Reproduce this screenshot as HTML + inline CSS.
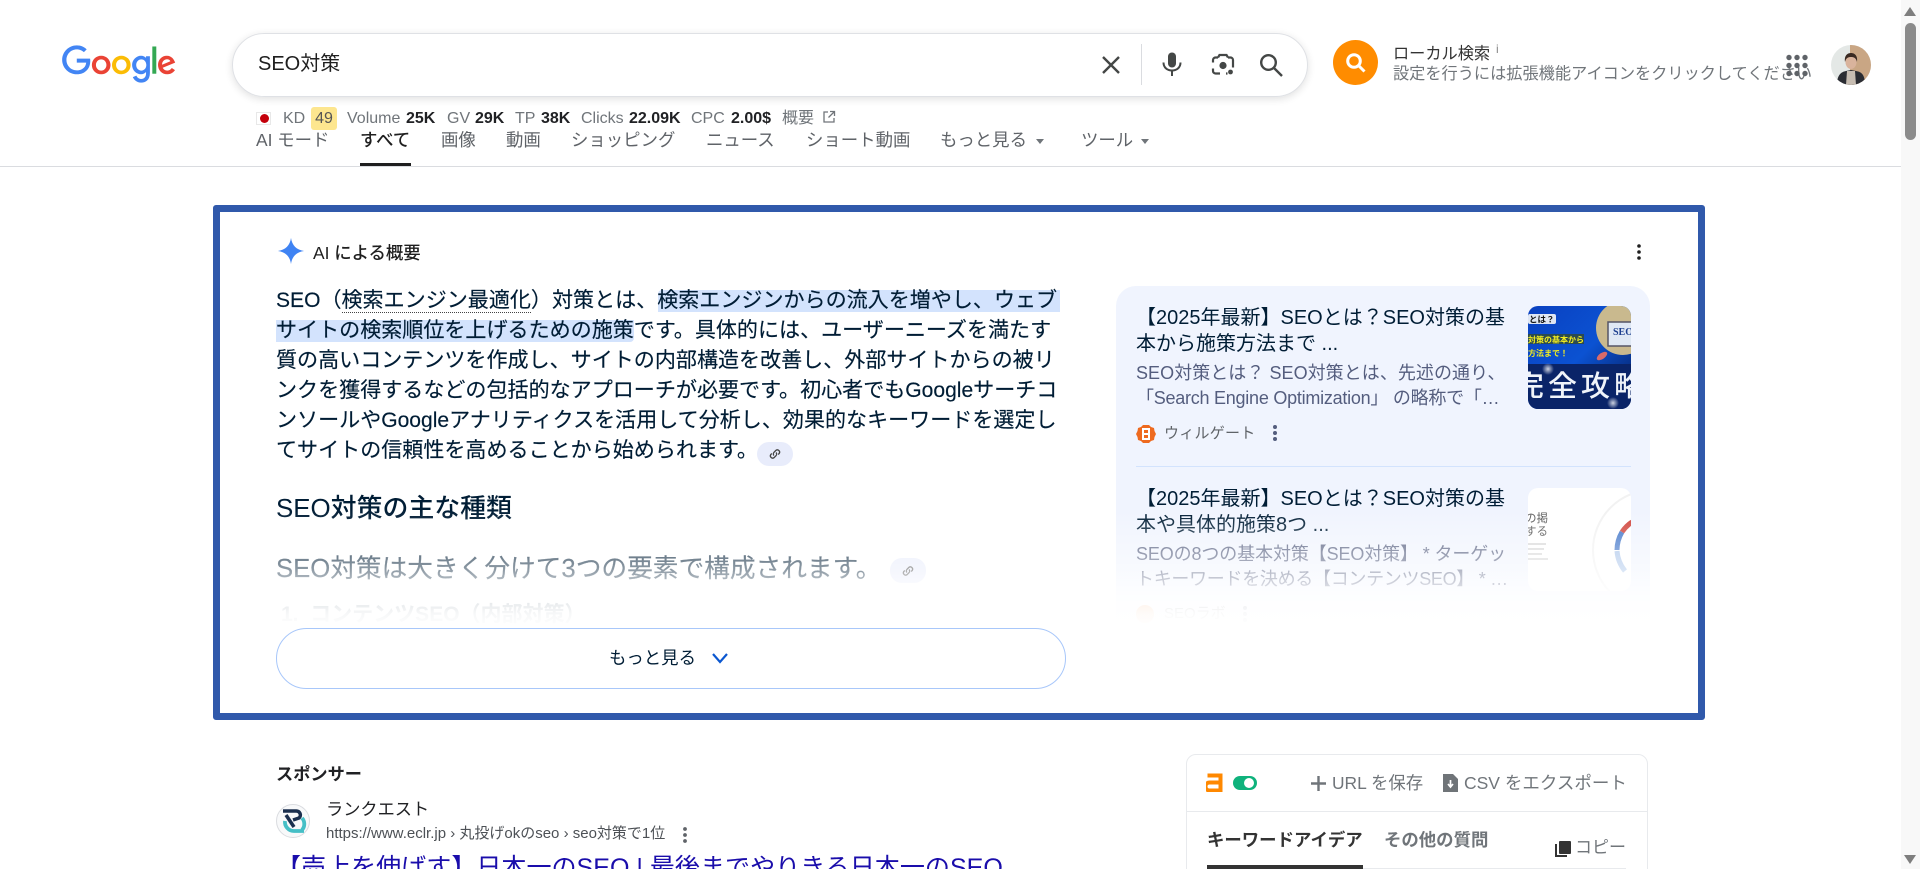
<!DOCTYPE html>
<html lang="ja"><head><meta charset="utf-8"><title>SEO対策 - Google 検索</title>
<style>
html,body{margin:0;padding:0;width:1920px;height:869px;overflow:hidden;background:#fff}
body{position:relative;font-family:"Liberation Sans","Noto Sans CJK JP",sans-serif;color:#1f1f1f}
.a{position:absolute;white-space:nowrap}
.g{color:#70757a}.b{font-weight:700;color:#202124}
.k{font-size:16px;line-height:20px;top:109px}
.t{font-size:17.4px;line-height:24px;top:128px;color:#5f6368}
.l{left:276px;font-size:21.06px;line-height:30px;color:#001d35;-webkit-text-stroke:.15px #001d35}
.h{position:absolute;background:#d3e3fd}
.tt{left:1136px;font-size:20px;line-height:26px;color:#001d35}
.sn{left:1136px;font-size:18px;line-height:25px;color:#545d7e}
svg{position:absolute;display:block}
</style></head><body>

<svg style="left:61.500px;top:44.500px" width="114" height="39" viewBox="0 0 272 92" role="img" aria-label="Google"><title>Google</title>
<path fill="#EA4335" d="M115.75 47.18c0 12.77-9.99 22.18-22.25 22.18s-22.25-9.41-22.25-22.18C71.25 34.32 81.24 25 93.5 25s22.25 9.32 22.25 22.18zm-9.74 0c0-7.98-5.79-13.44-12.51-13.44S80.99 39.2 80.99 47.18c0 7.9 5.79 13.44 12.51 13.44s12.51-5.55 12.51-13.44z"/>
<path fill="#FBBC05" d="M163.75 47.18c0 12.77-9.99 22.18-22.25 22.18s-22.25-9.41-22.25-22.18c0-12.85 9.99-22.18 22.25-22.18s22.25 9.32 22.25 22.18zm-9.74 0c0-7.98-5.79-13.44-12.51-13.44s-12.51 5.46-12.51 13.44c0 7.9 5.79 13.44 12.51 13.44s12.51-5.55 12.51-13.44z"/>
<path fill="#4285F4" d="M209.75 26.34v39.82c0 16.38-9.66 23.07-21.08 23.07-10.75 0-17.22-7.19-19.66-13.07l8.48-3.53c1.51 3.61 5.21 7.87 11.17 7.87 7.31 0 11.84-4.51 11.84-13v-3.19h-.34c-2.18 2.69-6.38 5.04-11.68 5.04-11.09 0-21.25-9.66-21.25-22.09 0-12.52 10.16-22.26 21.25-22.26 5.29 0 9.49 2.35 11.68 4.96h.34v-3.61h9.25zm-8.56 20.92c0-7.81-5.21-13.52-11.84-13.52-6.72 0-12.35 5.71-12.35 13.52 0 7.73 5.63 13.36 12.35 13.36 6.63 0 11.84-5.63 11.84-13.36z"/>
<path fill="#34A853" d="M225 3v65h-9.5V3h9.5z"/>
<path fill="#EA4335" d="M262.02 54.48l7.56 5.04c-2.44 3.61-8.32 9.83-18.48 9.83-12.6 0-22.01-9.74-22.01-22.18 0-13.19 9.49-22.18 20.92-22.18 11.51 0 17.14 9.16 18.98 14.11l1.01 2.52-29.65 12.28c2.27 4.45 5.8 6.72 10.75 6.72 4.96 0 8.4-2.44 10.92-6.14zm-23.27-7.98l19.82-8.23c-1.09-2.77-4.37-4.7-8.23-4.7-4.95 0-11.84 4.37-11.59 12.93z"/>
<path fill="#4285F4" d="M35.29 41.41V32H67c.31 1.64.47 3.58.47 5.68 0 7.06-1.93 15.79-8.15 22.01-6.05 6.3-13.78 9.66-24.02 9.66C16.32 69.35.36 53.89.36 34.91.36 15.93 16.32.47 35.3.47c10.5 0 17.98 4.12 23.6 9.49l-6.64 6.64c-4.03-3.78-9.49-6.72-16.97-6.72-13.86 0-24.7 11.17-24.7 25.03 0 13.86 10.84 25.03 24.7 25.03 8.99 0 14.11-3.61 17.39-6.89 2.66-2.66 4.41-6.46 5.1-11.65l-22.49.01z"/>
</svg>

<!-- search box -->
<div class="a" style="left:232px;top:33px;width:1074px;height:62px;border:1px solid #dfe1e5;border-radius:32px;box-shadow:0 2px 8px rgba(32,33,36,.14)"></div>
<div class="a" style="left:258px;top:51px;font-size:20px;line-height:26px;color:#1f1f1f">SEO対策</div>
<svg style="left:1100px;top:54px" width="22" height="22" viewBox="0 0 22 22"><path d="M3 3 19 19M19 3 3 19" stroke="#444746" stroke-width="2.4" fill="none"/></svg>
<div class="a" style="left:1141px;top:44px;width:1px;height:41px;background:#dadce0"></div>
<svg style="left:1160px;top:51px" width="24" height="26" viewBox="0 0 24 26"><rect x="8" y="1.5" width="8" height="15" rx="4" fill="#444746"/><path d="M3.5 11.5c0 5 3.7 8 8.5 8s8.5-3 8.5-8" stroke="#444746" stroke-width="2" fill="none"/><path d="M12 19v6" stroke="#444746" stroke-width="2"/></svg>
<svg style="left:1210px;top:52px" width="26" height="26" viewBox="0 0 26 26" fill="none" stroke="#444746" stroke-width="2.2"><path d="M8 5.500H5.500A2.500 2.500 0 0 0 3 8v2.500M3 16.500V19a2.500 2.500 0 0 0 2.500 2.500H10M16 21.500h1.500M23 15.500V8a2.500 2.500 0 0 0-2.500-2.500H18M8 5.500 9.500 3h7L18 5.500"/><circle cx="13" cy="13.500" r="3.600" fill="#444746" stroke="none"/><circle cx="20.500" cy="20" r="2.400" fill="#444746" stroke="none"/></svg>
<svg style="left:1258px;top:52px" width="26" height="26" viewBox="0 0 26 26" fill="none" stroke="#444746" stroke-width="2.400"><circle cx="10.500" cy="10.500" r="7.300"/><path d="M16 16l8 8"/></svg>

<!-- extension -->
<div class="a" style="left:1333px;top:40px;width:45px;height:45px;border-radius:50%;background:#ff8c00"></div>
<svg style="left:1344px;top:51px" width="24" height="24" viewBox="0 0 24 24" fill="none" stroke="#fff" stroke-width="3"><circle cx="10" cy="10" r="6.300"/><path d="M14.500 14.500 20.500 20.500"/></svg>
<div class="a" style="left:1393px;top:43px;font-size:16.200px;line-height:22px;color:#333">ローカル検索</div>
<div class="a" style="left:1496px;top:42px;font-size:12px;line-height:14px;color:#888">i</div>
<div class="a" style="left:1393px;top:63px;font-size:16.200px;line-height:22px;color:#70757a">設定を行うには拡張機能アイコンをクリックしてください</div>
<svg style="left:1785px;top:54px" width="24" height="24" viewBox="0 0 24 24" fill="#5f6368"><circle cx="4" cy="3.500" r="2.700"/><circle cx="12" cy="3.500" r="2.700"/><circle cx="20" cy="3.500" r="2.700"/><circle cx="4" cy="11.500" r="2.700"/><circle cx="12" cy="11.500" r="2.700"/><circle cx="20" cy="11.500" r="2.700"/><circle cx="4" cy="19.500" r="2.700"/><circle cx="12" cy="19.500" r="2.700"/><circle cx="20" cy="19.500" r="2.700"/></svg>
<svg style="left:1831px;top:45px" width="40" height="40" viewBox="0 0 40 40"><defs><clipPath id="av"><circle cx="20" cy="20" r="20"/></clipPath></defs><g clip-path="url(#av)"><rect width="40" height="40" fill="#e4e8e6"/><rect x="19" width="21" height="40" fill="#c9a684"/><path d="M6 40c0-10 4-13 9-14l5-1 5 1c6 1 9 4 9 14z" fill="#2b2d33"/><path d="M16 26h8l1 14h-10z" fill="#c7bdb2"/><ellipse cx="20" cy="17" rx="5.500" ry="7" fill="#d9b39c"/><path d="M14 17c-1-7 3-9 6-9s7 2 6 9c-1-4-3-5-6-5s-5 1-6 5z" fill="#3a2a22"/></g></svg>

<!-- metrics -->
<div class="a" style="left:256px;top:112px;width:15px;height:13px;border:1px solid #e8e8e8;box-sizing:border-box;background:#fff"></div>
<div class="a" style="left:260px;top:114px;width:9px;height:9px;border-radius:50%;background:#c4000b"></div>
<div class="a k g" style="left:283px">KD</div>
<div class="a" style="left:311px;top:107px;width:26px;height:23px;background:#fde68f;border-radius:3px;font-size:16px;line-height:23px;text-align:center;color:#555">49</div>
<div class="a k g" style="left:347px">Volume</div><div class="a k b" style="left:406px">25K</div>
<div class="a k g" style="left:447px">GV</div><div class="a k b" style="left:475px">29K</div>
<div class="a k g" style="left:515px">TP</div><div class="a k b" style="left:541px">38K</div>
<div class="a k g" style="left:581px">Clicks</div><div class="a k b" style="left:629px">22.09K</div>
<div class="a k g" style="left:691px">CPC</div><div class="a k b" style="left:731px">2.00$</div>
<div class="a k g" style="left:782px">概要</div>
<svg style="left:822px;top:110px" width="14" height="14" viewBox="0 0 14 14" fill="none" stroke="#70757a" stroke-width="1.300"><path d="M6 2H2v10h10V8M8 1.500h4.500V6M12.500 1.500 6.500 7.500"/></svg>

<!-- tabs -->
<div class="a t" style="left:256px">AI モード</div>
<div class="a t" style="left:360px;color:#1f1f1f;font-weight:500">すべて</div>
<div class="a t" style="left:441px">画像</div>
<div class="a t" style="left:506px">動画</div>
<div class="a t" style="left:571px">ショッピング</div>
<div class="a t" style="left:706px">ニュース</div>
<div class="a t" style="left:806px">ショート動画</div>
<div class="a t" style="left:940px">もっと見る</div>
<div class="a" style="left:1036px;top:139px;border:4px solid transparent;border-top:5px solid #70757a;border-bottom:0"></div>
<div class="a t" style="left:1081px">ツール</div>
<div class="a" style="left:1141px;top:139px;border:4px solid transparent;border-top:5px solid #70757a;border-bottom:0"></div>
<div class="a" style="left:0;top:166px;width:1901px;height:1px;background:#dadce0"></div>
<div class="a" style="left:360px;top:163px;width:51px;height:3px;background:#1f1f1f"></div>

<!-- AI overview frame -->
<div class="a" style="left:213px;top:205px;width:1492px;height:515px;box-sizing:border-box;border:7.500px solid #3059ab;border-radius:3px"></div>
<svg style="left:277px;top:237px" width="28" height="28" viewBox="0 0 30 30"><path d="M15 1C16 9 21 14 29 15 21 16 16 21 15 29 14 21 9 16 1 15 9 14 14 9 15 1z" fill="#3f83f3"/></svg>
<div class="a" style="left:313px;top:242px;font-size:17.400px;line-height:22px;font-weight:500;color:#1f1f1f">AI による概要</div>
<svg style="left:1633px;top:243px" width="12" height="18" viewBox="0 0 12 18" fill="#1f1f1f"><circle cx="6" cy="3" r="1.800"/><circle cx="6" cy="9" r="1.800"/><circle cx="6" cy="15" r="1.800"/></svg>

<div class="h" style="left:658px;top:290px;width:402px;height:22px;border-radius:4px 0 0 0"></div>
<div class="h" style="left:276px;top:320px;width:358px;height:22px;border-radius:0 0 4px 0"></div>
<div class="a l" style="top:286px">SEO（<span style="border-bottom:1px dotted #444">検索エンジン最適化</span>）対策とは、検索エンジンからの流入を増やし、ウェブ</div>
<div class="a l" style="top:316px">サイトの検索順位を上げるための施策です。具体的には、ユーザーニーズを満たす</div>
<div class="a l" style="top:346px">質の高いコンテンツを作成し、サイトの内部構造を改善し、外部サイトからの被リ</div>
<div class="a l" style="top:376px">ンクを獲得するなどの包括的なアプローチが必要です。初心者でもGoogleサーチコ</div>
<div class="a l" style="top:406px">ンソールやGoogleアナリティクスを活用して分析し、効果的なキーワードを選定し</div>
<div class="a l" style="top:436px">てサイトの信頼性を高めることから始められます。</div>
<div class="a" style="left:757px;top:442px;width:36px;height:24px;border-radius:12px;background:#e8ecfb"></div>
<svg style="left:767px;top:446px" width="16" height="16" viewBox="0 0 16 16" fill="none" stroke="#444" stroke-width="1.300"><path d="M7 9.500a2.300 2.300 0 0 1 0-3.200l2-2a2.300 2.300 0 0 1 3.200 3.200l-1 1M9 6.500a2.300 2.300 0 0 1 0 3.200l-2 2a2.300 2.300 0 0 1-3.200-3.200l1-1"/></svg>

<div class="a" style="left:276px;top:492px;font-size:25.900px;line-height:34px;font-weight:500;color:#001d35">SEO対策の主な種類</div>
<div class="a" style="left:276px;top:552px;font-size:25.700px;line-height:34px;color:#001d35;-webkit-text-stroke:.15px #001d35">SEO対策は大きく分けて3つの要素で構成されます。</div>
<div class="a" style="left:890px;top:558px;width:36px;height:25px;border-radius:12px;background:#e8ecfb"></div>
<svg style="left:900px;top:563px" width="16" height="16" viewBox="0 0 16 16" fill="none" stroke="#444" stroke-width="1.300"><path d="M7 9.500a2.300 2.300 0 0 1 0-3.200l2-2a2.300 2.300 0 0 1 3.200 3.200l-1 1M9 6.500a2.300 2.300 0 0 1 0 3.200l-2 2a2.300 2.300 0 0 1-3.200-3.200l1-1"/></svg>
<div class="a" style="left:281px;top:601px;font-size:21px;line-height:28px;font-weight:700;color:#001d35">1.&nbsp; コンテンツSEO（内部対策）</div>

<!-- right card -->
<div class="a" style="left:1116px;top:286px;width:534px;height:340px;background:#f0f4fe;border-radius:20px 20px 0 0"></div>
<div class="a tt" style="top:305px">【2025年最新】SEOとは？SEO対策の基</div>
<div class="a tt" style="top:331px">本から施策方法まで ...</div>
<div class="a sn" style="top:361px;letter-spacing:.05px">SEO対策とは？ SEO対策とは、先述の通り、</div>
<div class="a sn" style="top:386px;letter-spacing:-.25px">「Search Engine Optimization」 の略称で「…</div>
<svg style="left:1136px;top:424px" width="20" height="20" viewBox="0 0 20 20"><path d="M7 1h6l2 2 3 1 .5 3L20 10l-1.500 3-.5 3-3 1-2 2H7l-2-2-3-1-.5-3L0 10l1.500-3L2 4l3-1z" fill="#ee6a1f"/><path d="M7 5h6v10H7zM7 10h6" fill="none" stroke="#fff" stroke-width="2"/></svg>
<div class="a" style="left:1164px;top:423px;font-size:15px;line-height:22px;letter-spacing:.25px;color:#5f6368">ウィルゲート</div>
<svg style="left:1269px;top:423px" width="12" height="20" viewBox="0 0 12 20" fill="#545d7e"><circle cx="6" cy="4" r="2"/><circle cx="6" cy="10" r="2"/><circle cx="6" cy="16" r="2"/></svg>
<div class="a" style="left:1136px;top:466px;width:495px;height:1px;background:#d3e3fd"></div>

<svg style="left:1528px;top:306px;border-radius:10px" width="103" height="103" viewBox="0 0 103 103">
<defs><linearGradient id="bg" x1="0" y1="0" x2="1" y2="1"><stop offset="0" stop-color="#0a40c0"/><stop offset=".5" stop-color="#0b52d2"/><stop offset="1" stop-color="#061a55"/></linearGradient>
<radialGradient id="st"><stop offset="0" stop-color="#fff" stop-opacity=".8"/><stop offset="1" stop-color="#fff" stop-opacity="0"/></radialGradient></defs>
<rect width="103" height="103" fill="url(#bg)"/><rect y="58" width="103" height="45" fill="#0a2468"/>
<rect y="8" width="28" height="10" rx="2" fill="#dfe6f2"/><text x="1" y="16.500" font-size="8.500" font-weight="700" fill="#111" font-family="Noto Sans CJK JP,sans-serif">とは？</text>
<rect y="28" width="56" height="10" fill="#2a4a50"/><text x="0" y="36.500" font-size="8" font-weight="700" fill="#f4ee20" font-family="Noto Sans CJK JP,sans-serif">対策の基本から</text>
<text x="0" y="50" font-size="8" font-weight="700" fill="#f4ee20" font-family="Noto Sans CJK JP,sans-serif">方法まで！</text>
<circle cx="95" cy="22" r="27" fill="#c9b98e"/><rect x="80" y="16" width="30" height="24" fill="#dfe8f4" stroke="#556" stroke-width="1.500"/><text x="85" y="29" font-size="10" font-weight="700" fill="#1d3f8f" font-family="Liberation Serif,serif">SEO</text>
<ellipse cx="74" cy="50" rx="6" ry="3" fill="#d86a6a" transform="rotate(-35 74 50)"/>
<circle cx="20" cy="63" r="6" fill="url(#st)"/><circle cx="85" cy="97" r="6" fill="url(#st)"/>
<text x="-13" y="90" font-size="29" letter-spacing="4" font-weight="500" fill="#f0f4fa" font-family="Noto Sans CJK JP,sans-serif">完全攻略</text>
</svg>

<div class="a tt" style="top:486px">【2025年最新】SEOとは？SEO対策の基</div>
<div class="a tt" style="top:512px">本や具体的施策8つ ...</div>
<div class="a sn" style="top:542px;letter-spacing:-.12px">SEOの8つの基本対策【SEO対策】 * ターゲッ</div>
<div class="a sn" style="top:567px;letter-spacing:-.3px">トキーワードを決める【コンテンツSEO】 * …</div>
<div class="a" style="left:1136px;top:605px;width:18px;height:18px;border-radius:50%;background:#f08a3c"></div>
<div class="a" style="left:1164px;top:603px;font-size:15px;line-height:22px;color:#5f6368">SEOラボ</div>
<svg style="left:1239px;top:604px" width="12" height="20" viewBox="0 0 12 20" fill="#545d7e"><circle cx="6" cy="4" r="2"/><circle cx="6" cy="10" r="2"/><circle cx="6" cy="16" r="2"/></svg>

<svg style="left:1528px;top:488px;border-radius:10px" width="103" height="103" viewBox="0 0 103 103">
<rect width="103" height="103" fill="#fff"/>
<text x="-3" y="34" font-size="11.500" fill="#555" font-family="Noto Sans CJK JP,sans-serif">の掲</text>
<text x="-3" y="47" font-size="11.500" fill="#555" font-family="Noto Sans CJK JP,sans-serif">する</text>
<path d="M0 56h18M0 61h16M0 66h14M0 71h20" stroke="#d4d4d4" stroke-width="1.800"/>
<circle cx="125" cy="62" r="60" fill="none" stroke="#f2f2f2" stroke-width="2"/>
<path d="M89 62a36 36 0 0 1 5-18" fill="none" stroke="#3f74c8" stroke-width="5"/><path d="M94 44a36 36 0 0 1 10-10" fill="none" stroke="#d0443c" stroke-width="5"/><path d="M89 63a36 36 0 0 0 8 20" fill="none" stroke="#a9c4ea" stroke-width="5"/>
</svg>

<!-- fade -->
<div class="a" style="left:221px;top:510px;width:1476px;height:118px;background:linear-gradient(to bottom,rgba(255,255,255,0) 0,rgba(255,255,255,.55) 59px,rgba(255,255,255,.85) 82px,rgba(255,255,255,.97) 104px,#fff 118px)"></div>

<!-- more button -->
<div class="a" style="left:276px;top:628px;width:790px;height:61px;box-sizing:border-box;border:1px solid #a8c7fa;border-radius:31px;background:#fff"></div>
<div class="a" style="left:609px;top:645px;font-size:17.400px;line-height:26px;color:#001d35">もっと見る</div>
<svg style="left:711px;top:651px" width="18" height="14" viewBox="0 0 18 14" fill="none" stroke="#0b57d0" stroke-width="2.200"><path d="M2 3l7 8 7-8"/></svg>

<!-- sponsored -->
<div class="a" style="left:276px;top:762px;font-size:17.200px;line-height:24px;font-weight:700;color:#202124">スポンサー</div>
<div class="a" style="left:276px;top:804px;width:32px;height:32px;border:1px solid #dadce0;border-radius:50%;background:#f8f9fa"></div>
<svg style="left:279px;top:807px" width="28" height="28" viewBox="0 0 28 28" fill="none"><path d="M4 4h13a4 4 0 0 1 3 7l-6 2" stroke="#1a2f4e" stroke-width="3.500"/><path d="M7 8l8 12" stroke="#1a2f4e" stroke-width="3.500"/><path d="M6 14a9 9 0 0 0 9 10h10M23 11a9 9 0 0 1 0 12" stroke="#45bfc6" stroke-width="3.800"/></svg>
<div class="a" style="left:326px;top:797px;font-size:17.200px;line-height:24px;color:#202124">ランクエスト</div>
<div class="a" style="left:326px;top:824px;font-size:15px;line-height:20px;color:#4d5156">https://www.eclr.jp › 丸投げokのseo › seo対策で1位</div>
<svg style="left:679px;top:825px" width="12" height="20" viewBox="0 0 12 20" fill="#5f6368"><circle cx="6" cy="4" r="1.900"/><circle cx="6" cy="10" r="1.900"/><circle cx="6" cy="16" r="1.900"/></svg>
<div class="a" style="left:276px;top:851px;font-size:25.050px;line-height:34px;color:#1a0dab">【売上を伸ばす】日本一のSEO | 最後までやりきる日本一のSEO</div>

<!-- ahrefs card -->
<div class="a" style="left:1186px;top:754px;width:462px;height:130px;box-sizing:border-box;border:1px solid #e8eaed;border-radius:10px"></div>
<div class="a" style="left:1186px;top:811px;width:462px;height:1px;background:#e8eaed"></div>
<svg style="left:1206px;top:773px" width="17" height="19" viewBox="0 0 17 19" fill="none"><path d="M1.500 2.500h13v15h-11a3 3 0 0 1 0-8h11" stroke="#ff8800" stroke-width="4"/></svg>
<div class="a" style="left:1233px;top:776px;width:24px;height:14px;border-radius:7px;background:#0fb27c"></div>
<div class="a" style="left:1244px;top:778px;width:10px;height:10px;border-radius:50%;background:#fff"></div>
<svg style="left:1310px;top:775px" width="17" height="17" viewBox="0 0 17 17"><path d="M8.500 1v15M1 8.500h15" stroke="#70757a" stroke-width="2.400"/></svg>
<div class="a" style="left:1332px;top:771px;font-size:17.400px;line-height:24px;color:#70757a">URL を保存</div>
<svg style="left:1443px;top:774px" width="15" height="18" viewBox="0 0 15 18"><path d="M0 0h10l5 5v13H0z" fill="#6f7478"/><path d="M7.500 6v6M5 10l2.500 3 2.500-3" stroke="#fff" stroke-width="1.700" fill="none"/></svg>
<div class="a" style="left:1464px;top:771px;font-size:17.500px;line-height:24px;color:#70757a">CSV をエクスポート</div>
<div class="a" style="left:1207px;top:828px;font-size:17.400px;line-height:24px;font-weight:700;color:#333">キーワードアイデア</div>
<div class="a" style="left:1384px;top:828px;font-size:17.400px;line-height:24px;font-weight:700;color:#70757a">その他の質問</div>
<svg style="left:1555px;top:841px" width="16" height="16" viewBox="0 0 16 16"><rect x="4" y="0" width="12" height="13" rx="1" fill="#333"/><path d="M1 3v12h11" stroke="#333" stroke-width="2" fill="none"/></svg>
<div class="a" style="left:1575px;top:836px;font-size:17px;line-height:24px;color:#70757a">コピー</div>
<div class="a" style="left:1207px;top:868px;width:419px;height:1px;background:#e8eaed"></div>
<div class="a" style="left:1207px;top:865px;width:156px;height:4px;background:#333"></div>

<!-- scrollbar -->
<div class="a" style="left:1901px;top:0;width:19px;height:869px;background:#f8f8f8"></div>
<div class="a" style="left:1905px;top:23px;width:11px;height:117px;border-radius:6px;background:#8b8b8b"></div>
<div class="a" style="left:1904px;top:7px;border:6.500px solid transparent;border-bottom:9px solid #7e7e7e;border-top:0"></div>
<div class="a" style="left:1904px;top:855px;border:6.500px solid transparent;border-top:9px solid #7e7e7e;border-bottom:0"></div>
</body></html>
